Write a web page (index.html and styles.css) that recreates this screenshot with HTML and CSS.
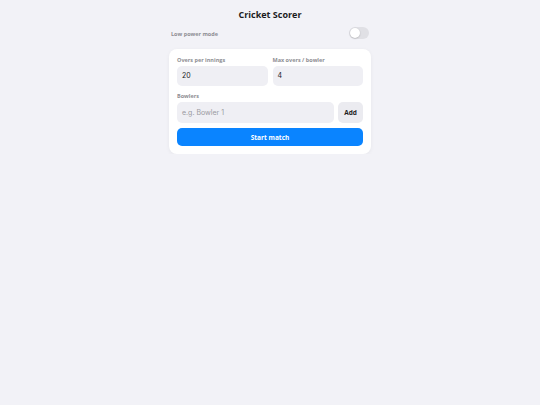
FILE: index.html
```html
<!DOCTYPE html>
<html>
<head>
<meta charset="utf-8">
<link rel="stylesheet" href="styles.css">
</head>
<body>
<div class="app">
  <h1 class="title">Cricket Scorer</h1>
  <div class="setting">
    <span class="setting-label">Low power mode</span>
    <span class="toggle"><span class="knob"></span></span>
  </div>
  <div class="card">
    <div class="grid">
      <div class="field">
        <label class="label">Overs per innings</label>
        <div class="input">20</div>
      </div>
      <div class="field">
        <label class="label">Max overs / bowler</label>
        <div class="input">4</div>
      </div>
    </div>
    <div class="field bowlers">
      <label class="label">Bowlers</label>
      <div class="row">
        <div class="input placeholder">e.g. Bowler 1</div>
        <div class="btn-add">Add</div>
      </div>
    </div>
    <div class="btn-start">Start match</div>
  </div>
</div>
</body>
</html>
```
FILE: styles.css
```css
html, body {
  margin: 0;
  padding: 0;
  background: #f2f2f7;
  font-family: "Open Sans", "Noto Sans", sans-serif;
  color: #1c1c1e;
}
.app {
  width: 202px;
  margin: 0 auto;
  padding-top: 8px;
}
.title {
  margin: 0;
  font-size: 9px;
  line-height: 14px;
  font-weight: 700;
  text-align: center;
}
.setting {
  display: flex;
  justify-content: space-between;
  align-items: center;
  padding: 5px 2px 0 2px;
}
.setting-label {
  font-size: 5.5px;
  font-weight: 700;
  color: #8e8e93;
  padding-top: 1px;
}
.toggle {
  width: 20px;
  height: 12px;
  border-radius: 6px;
  background: #e0e0e5;
  display: flex;
  align-items: center;
  padding: 1px;
  box-sizing: border-box;
}
.knob {
  width: 10px;
  height: 10px;
  border-radius: 50%;
  background: #fff;
  box-shadow: 0 0.5px 1.5px rgba(0,0,0,0.25);
}
.card {
  margin-top: 10px;
  background: #fff;
  border-radius: 8px;
  padding: 8px;
  box-shadow: 0 1px 4px rgba(0,0,0,0.05);
  display: flex;
  flex-direction: column;
}
.grid {
  display: grid;
  grid-template-columns: 1fr 1fr;
  gap: 5px;
}
.field {
  display: flex;
  flex-direction: column;
  gap: 2px;
}
.label {
  font-size: 5.5px;
  line-height: 7px;
  font-weight: 700;
  color: #8e8e93;
}
.input {
  height: 20px;
  border-radius: 5px;
  background: #efeff4;
  font-family: Inter, "Open Sans", sans-serif;
  font-size: 7px;
  line-height: 20px;
  padding: 0 5px;
  color: #1c1c1e;
}
.placeholder {
  color: #9a9aa0;
  flex: 1;
  height: 21px;
  line-height: 21px;
}
.bowlers {
  margin-top: 7px;
}
.row {
  display: flex;
  gap: 4px;
}
.btn-add {
  width: 25px;
  height: 21px;
  border-radius: 5px;
  background: #ebebf0;
  font-size: 6.5px;
  font-weight: 700;
  display: flex;
  align-items: center;
  justify-content: center;
}
.btn-start {
  margin-top: 5px;
  height: 18px;
  border-radius: 5px;
  background: #0a84ff;
  color: #fff;
  font-size: 6.5px;
  font-weight: 700;
  display: flex;
  align-items: center;
  justify-content: center;
}
```
